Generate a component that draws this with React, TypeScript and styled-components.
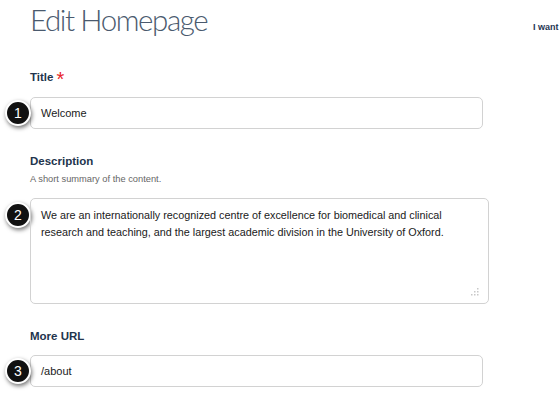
import React from "react";
import styled, { createGlobalStyle } from "styled-components";

const Global = createGlobalStyle`
  html, body { margin: 0; padding: 0; background: #fff; }
  body { font-family: "Liberation Sans", Arial, sans-serif; overflow: hidden; }
`;

const Page = styled.div`
  width: 560px;
  height: 401px;
  overflow: hidden;
  position: relative;
`;

const Header = styled.header`
  display: flex;
  align-items: flex-start;
`;

const Heading = styled.h1`
  flex: 1;
  margin: 0 0 0 30px;
  font-family: Lato, "Open Sans", sans-serif;
  font-weight: 300;
  font-size: 29.5px;
  line-height: 40px;
  color: #4a5a6e;
  letter-spacing: -1.4px;
`;

const Aside = styled.div`
  width: 27px;
  white-space: nowrap;
  font-size: 9px;
  font-weight: bold;
  color: #1f3553;
  padding-top: 22px;
`;

const Form = styled.div`
  display: flex;
  flex-direction: column;
  padding-left: 30px;
`;

const Field = styled.div<{ $top: number }>`
  margin-top: ${(p) => p.$top}px;
  display: flex;
  flex-direction: column;
`;

const Label = styled.label`
  font-size: 11.5px;
  font-weight: bold;
  color: #22344d;
  line-height: 14px;
  display: flex;
  align-items: center;
  gap: 3px;
`;

const Req = styled.span`
  color: #e8262a;
  font-size: 20px;
  font-weight: normal;
  line-height: 14px;
  position: relative;
  top: 2px;
`;

const Help = styled.div`
  font-size: 9.3px;
  color: #666;
  margin-top: 5px;
  line-height: 12px;
`;

const Control = styled.div<{ $gap: number }>`
  position: relative;
  margin-top: ${(p) => p.$gap}px;
`;

const Input = styled.div<{ $w: number }>`
  width: ${(p) => p.$w}px;
  height: 32px;
  box-sizing: border-box;
  border: 1px solid #d2d2d2;
  border-radius: 5px;
  padding: 0 10px;
  display: flex;
  align-items: center;
  font-size: 11px;
  color: #1a1a1a;
`;

const Area = styled.div`
  width: 459px;
  height: 106px;
  box-sizing: border-box;
  border: 1px solid #d2d2d2;
  border-radius: 5px;
  padding: 8px 10px;
  font-size: 10.8px;
  line-height: 17px;
  color: #1a1a1a;
  position: relative;
`;

const Grip = styled.svg`
  position: absolute;
  right: 9px;
  bottom: 7px;
`;

const Badge = styled.div<{ $y: number }>`
  position: absolute;
  left: -25px;
  top: ${(p) => p.$y}px;
  width: 22px;
  height: 22px;
  border-radius: 50%;
  background: #111;
  border: 2px solid #fff;
  box-shadow: 1px 2px 4px rgba(0, 0, 0, 0.55);
  color: #fff;
  font-size: 14px;
  display: flex;
  align-items: center;
  justify-content: center;
`;

export default function App() {
  return (
    <Page>
      <Global />
      <Header>
        <Heading>Edit Homepage</Heading>
        <Aside>I want</Aside>
      </Header>
      <Form>
        <Field $top={30}>
          <Label>
            Title <Req>*</Req>
          </Label>
          <Control $gap={13}>
            <Badge $y={3}>1</Badge>
            <Input $w={453}>Welcome</Input>
          </Control>
        </Field>
        <Field $top={25}>
          <Label>Description</Label>
          <Help>A short summary of the content.</Help>
          <Control $gap={13}>
            <Badge $y={4}>2</Badge>
            <Area>
              We are an internationally recognized centre of excellence for biomedical and clinical
              research and teaching, and the largest academic division in the University of Oxford.
              <Grip width="8" height="8" viewBox="0 0 8 8">
                <rect x="6" y="0" width="1.5" height="1.5" fill="#c8c8c8" />
                <rect x="3" y="3" width="1.5" height="1.5" fill="#c8c8c8" />
                <rect x="6" y="3" width="1.5" height="1.5" fill="#c8c8c8" />
                <rect x="0" y="6" width="1.5" height="1.5" fill="#c8c8c8" />
                <rect x="3" y="6" width="1.5" height="1.5" fill="#c8c8c8" />
                <rect x="6" y="6" width="1.5" height="1.5" fill="#c8c8c8" />
              </Grip>
            </Area>
          </Control>
        </Field>
        <Field $top={25}>
          <Label>More URL</Label>
          <Control $gap={12}>
            <Badge $y={3}>3</Badge>
            <Input $w={453}>/about</Input>
          </Control>
        </Field>
      </Form>
    </Page>
  );
}
